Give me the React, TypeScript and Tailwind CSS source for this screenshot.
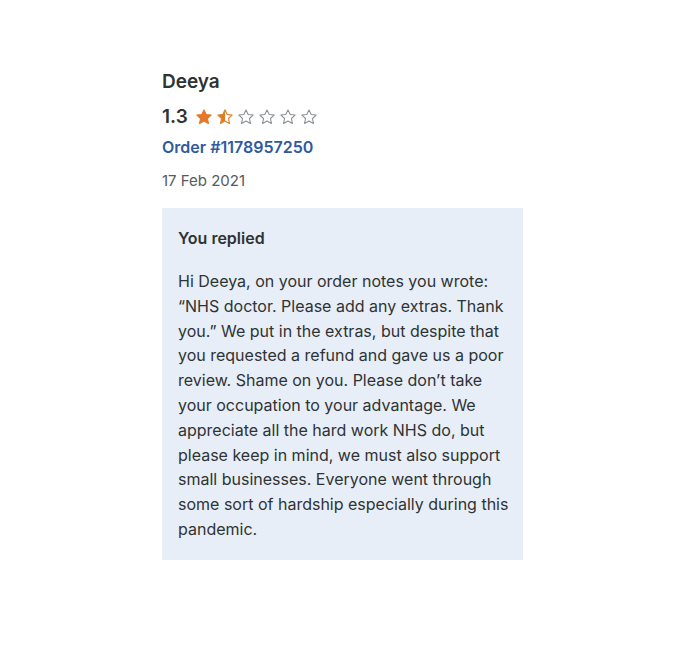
import React from "react";

const Star = ({ fill }: { fill: "full" | "half" | "none" }) => {
  const d =
    "M12 2.5l2.9 6.1 6.6.8-4.9 4.6 1.3 6.6L12 17.3l-5.9 3.3 1.3-6.6-4.9-4.6 6.6-.8z";
  return (
    <svg width="18" height="18" viewBox="0 0 24 24">
      <defs>
        <clipPath id="halfclip">
          <rect x="0" y="0" width="12" height="24" />
        </clipPath>
      </defs>
      {fill === "full" && <path d={d} fill="#e2792b" stroke="#e2792b" strokeWidth="1.5" strokeLinejoin="round" />}
      {fill === "half" && (
        <>
          <path d={d} fill="#e2792b" clipPath="url(#halfclip)" />
          <path d={d} fill="none" stroke="#d9892f" strokeWidth="1.6" strokeLinejoin="round" />
        </>
      )}
      {fill === "none" && <path d={d} fill="none" stroke="#8a8f93" strokeWidth="1.4" strokeLinejoin="round" />}
    </svg>
  );
};

export default function App() {
  return (
    <div
      className="w-[700px] h-[655px] bg-white"
      style={{ fontFamily: "Inter, 'Noto Sans', sans-serif" }}
    >
      <div className="pl-[162px] pt-[69px] text-[#2e3333]">
        <div className="text-[19px] font-semibold leading-[26px]">Deeya</div>
        <div className="flex items-center mt-[9px] h-[26px]">
          <span className="text-[19px] font-semibold mr-[7px]">1.3</span>
          <div className="flex gap-[3px]">
            <Star fill="full" />
            <Star fill="half" />
            <Star fill="none" />
            <Star fill="none" />
            <Star fill="none" />
            <Star fill="none" />
          </div>
        </div>
        <div className="text-[16px] font-semibold text-[#2d5aa0] mt-[5px] leading-[24px]">
          Order #1178957250
        </div>
        <div className="text-[15px] text-[#555b5e] mt-[11px] leading-[22px]">17 Feb 2021</div>
        <div className="w-[361px] bg-[#e8eef8] mt-[16px] pl-[16px] pr-[14px] pt-[18px] pb-[18px]">
          <div className="text-[16px] font-semibold leading-[24px]">You replied</div>
          <p className="text-[16px] leading-[24.8px] mt-[19px] text-[#2e3333]">
            Hi Deeya, on your order notes you wrote: “NHS doctor. Please add any extras. Thank you.” We put in the
            extras, but despite that you requested a refund and gave us a poor review. Shame on you. Please don’t take
            your occupation to your advantage. We appreciate all the hard work NHS do, but please keep in mind, we must
            also support small businesses. Everyone went through some sort of hardship especially during this pandemic.
          </p>
        </div>
      </div>
    </div>
  );
}
